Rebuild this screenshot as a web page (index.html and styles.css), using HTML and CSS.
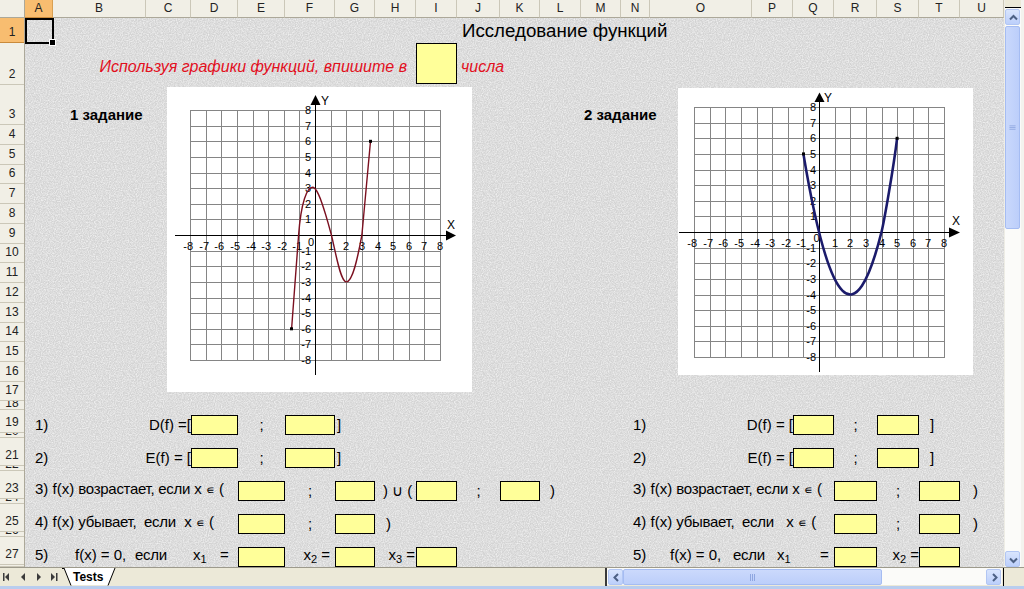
FILE: index.html
```html
<!DOCTYPE html>
<html lang="ru">
<head>
<meta charset="utf-8">
<title>Исследование функций</title>
<link rel="stylesheet" href="styles.css">
</head>
<body>
<div class="excel">
  <div class="work">
    <div class="main">
      <div class="colheads">
        <div class="corner"></div>
        <div class="ch sel">A</div><div class="ch">B</div><div class="ch">C</div><div class="ch">D</div><div class="ch">E</div><div class="ch">F</div><div class="ch">G</div><div class="ch">H</div><div class="ch">I</div><div class="ch">J</div><div class="ch">K</div><div class="ch">L</div><div class="ch">M</div><div class="ch">N</div><div class="ch">O</div><div class="ch">P</div><div class="ch">Q</div><div class="ch">R</div><div class="ch">S</div><div class="ch">T</div><div class="ch">U</div>
      </div>
      <div class="body">
        <div class="rowheads">
          <div class="rh sel">1</div><div class="rh">2</div><div class="rh">3</div><div class="rh">4</div><div class="rh">5</div><div class="rh">6</div><div class="rh">7</div><div class="rh">8</div><div class="rh">9</div><div class="rh">10</div><div class="rh">11</div><div class="rh">12</div><div class="rh">13</div><div class="rh">14</div><div class="rh">15</div><div class="rh">16</div><div class="rh">17</div><div class="rh short">18</div><div class="rh">19</div><div class="rh short">20</div><div class="rh">21</div><div class="rh short">22</div><div class="rh">23</div><div class="rh short">24</div><div class="rh">25</div><div class="rh short">26</div><div class="rh">27</div><div class="rh short">28</div>
        </div>
        <div class="sheet">
          <div class="a1"></div>
          <div class="title">Исследование функций</div>
          <div class="hint">Используя графики функций, впишите в</div>
          <div class="bigbox"></div>
          <div class="hint2">числа</div>
          <div class="task task1">1 задание</div>
          <div class="task task2">2 задание</div>

          <div class="chart chart1">
            <svg width="305" height="305" viewBox="0 0 305 305">
              <path class="grid" d="M23.5 23V274M39.5 23V274M54.5 23V274M70.5 23V274M86.5 23V274M101.5 23V274M117.5 23V274M132.5 23V274M164.5 23V274M179.5 23V274M195.5 23V274M211.5 23V274M226.5 23V274M242.5 23V274M257.5 23V274M273.5 23V274M23 23.5H274M23 39.5H274M23 54.5H274M23 70.5H274M23 86.5H274M23 101.5H274M23 117.5H274M23 132.5H274M23 164.5H274M23 179.5H274M23 195.5H274M23 211.5H274M23 226.5H274M23 242.5H274M23 257.5H274M23 273.5H274"/>
              <path class="axis" d="M8 148.5H281M148.5 288V16"/>
              <polygon class="arrow" points="279,143.5 289,148.5 279,153.5"/>
              <polygon class="arrow" points="143.5,18 148.5,8 153.5,18"/>
              <text class="lbl" x="154" y="18">Y</text>
              <text class="lbl" x="280" y="142">X</text>
              <g class="tk xt">
                <text x="26" y="163">-8</text><text x="42" y="163">-7</text><text x="57" y="163">-6</text><text x="73" y="163">-5</text><text x="89" y="163">-4</text><text x="104" y="163">-3</text><text x="120" y="163">-2</text><text x="135" y="163">-1</text><text x="167" y="163">1</text><text x="182" y="163">2</text><text x="198" y="163">3</text><text x="214" y="163">4</text><text x="229" y="163">5</text><text x="245" y="163">6</text><text x="260" y="163">7</text><text x="276" y="163">8</text>
              </g>
              <g class="tk yt">
                <text x="144" y="27">8</text><text x="144" y="43">7</text><text x="144" y="58">6</text><text x="144" y="74">5</text><text x="144" y="90">4</text><text x="144" y="105">3</text><text x="144" y="121">2</text><text x="144" y="136">1</text><text x="144" y="168">-1</text><text x="144" y="183">-2</text><text x="144" y="199">-3</text><text x="144" y="215">-4</text><text x="144" y="230">-5</text><text x="144" y="246">-6</text><text x="144" y="261">-7</text><text x="144" y="277">-8</text>
              </g>
              <text class="tk zero" x="144" y="159">0</text>
              <path class="curve1" d="M124.6 241.8L131.6 148C134.1 115 140 100.3 145.7 100.3C151 100.3 158 124 164.4 148C169 167 173.5 194.9 179.3 194.9C185.5 194.9 190.5 172 194.9 148L203.5 54.3"/>
              <rect class="dot" x="123" y="240.3" width="3" height="3"/>
              <rect class="dot" x="202" y="52.8" width="3" height="3"/>
            </svg>
          </div>

          <div class="chart chart2">
            <svg width="295" height="287" viewBox="0 0 295 287">
              <path class="grid" d="M16.5 19V270M32.5 19V270M47.5 19V270M63.5 19V270M79.5 19V270M94.5 19V270M110.5 19V270M125.5 19V270M157.5 19V270M172.5 19V270M188.5 19V270M204.5 19V270M219.5 19V270M235.5 19V270M250.5 19V270M266.5 19V270M16 19.5H267M16 35.5H267M16 50.5H267M16 66.5H267M16 82.5H267M16 97.5H267M16 113.5H267M16 128.5H267M16 160.5H267M16 175.5H267M16 191.5H267M16 207.5H267M16 222.5H267M16 238.5H267M16 253.5H267M16 269.5H267"/>
              <path class="axis" d="M1 144.5H274M141.5 284V12"/>
              <polygon class="arrow" points="271,139.5 282,144.5 271,149.5"/>
              <polygon class="arrow" points="136.5,14 141.5,4.5 146.5,14"/>
              <text class="lbl" x="146" y="14">Y</text>
              <text class="lbl" x="274" y="137">X</text>
              <g class="tk xt">
                <text x="19" y="159">-8</text><text x="35" y="159">-7</text><text x="50" y="159">-6</text><text x="66" y="159">-5</text><text x="82" y="159">-4</text><text x="97" y="159">-3</text><text x="113" y="159">-2</text><text x="128" y="159">-1</text><text x="160" y="159">1</text><text x="175" y="159">2</text><text x="191" y="159">3</text><text x="207" y="159">4</text><text x="222" y="159">5</text><text x="238" y="159">6</text><text x="253" y="159">7</text><text x="269" y="159">8</text>
              </g>
              <g class="tk yt">
                <text x="138" y="23">8</text><text x="138" y="39">7</text><text x="138" y="54">6</text><text x="138" y="70">5</text><text x="138" y="86">4</text><text x="138" y="101">3</text><text x="138" y="117">2</text><text x="138" y="132">1</text><text x="138" y="164">-1</text><text x="138" y="179">-2</text><text x="138" y="195">-3</text><text x="138" y="211">-4</text><text x="138" y="226">-5</text><text x="138" y="242">-6</text><text x="138" y="257">-7</text><text x="138" y="273">-8</text>
              </g>
              <text class="tk zero" x="138.5" y="154">0</text>
              <path class="curve2" d="M125.4 65.9Q164.4 300.25 203.5 144C206.1 133.6 215.5 80 219.1 50.3"/>
              <rect class="dot" x="124" y="64.4" width="3" height="3"/>
              <rect class="dot" x="217.6" y="48.8" width="3" height="3"/>
            </svg>
          </div>

          <!-- row 19 -->
          <div class="t r19 cA s2 num">1)</div>
          <div class="t r19 cB s2 end">D(f) =[</div>
          <div class="box r19 cD"></div>
          <div class="t r19 cE mid">;</div>
          <div class="box r19 cF"></div>
          <div class="t r19 cG pl2">]</div>
          <div class="t r19 cN num2">1)</div>
          <div class="t r19 cO s2 end">D(f) = [</div>
          <div class="box r19 cQ"></div>
          <div class="t r19 cR mid">;</div>
          <div class="box r19 cS"></div>
          <div class="t r19 cT pl11">]</div>

          <!-- row 21 -->
          <div class="t r21 cA s2 num">2)</div>
          <div class="t r21 cB s2 end">E(f) = [</div>
          <div class="box r21 cD"></div>
          <div class="t r21 cE mid">;</div>
          <div class="box r21 cF"></div>
          <div class="t r21 cG pl2">]</div>
          <div class="t r21 cN num2">2)</div>
          <div class="t r21 cO s2 end">E(f) = [</div>
          <div class="box r21 cQ"></div>
          <div class="t r21 cR mid">;</div>
          <div class="box r21 cS"></div>
          <div class="t r21 cT pl11">]</div>

          <!-- row 23 -->
          <div class="t r23 cA s4 num">3) f(x) <span class="cy">возрастает, если</span> x <span class="el">∊</span> (</div>
          <div class="box r23 cE"></div>
          <div class="t r23 cF mid">;</div>
          <div class="box r23 cG"></div>
          <div class="t r23 cH pl8">) ∪ (</div>
          <div class="box r23 cI"></div>
          <div class="t r23 cJ mid">;</div>
          <div class="box r23 cK"></div>
          <div class="t r23 cL pl10">)</div>
          <div class="t r23 cN s4 num2">3) f(x) <span class="cy">возрастает, если</span> x <span class="el">∊</span> (</div>
          <div class="box r23 cR"></div>
          <div class="t r23 cS mid">;</div>
          <div class="box r23 cT"></div>
          <div class="t r23 cU pl13">)</div>

          <!-- row 25 -->
          <div class="t r25 cA s4 num">4) f(x) <span class="cy">убывает,&nbsp; если</span>&nbsp; x <span class="el">∊</span> (</div>
          <div class="box r25 cE"></div>
          <div class="t r25 cF mid">;</div>
          <div class="box r25 cG"></div>
          <div class="t r25 cH pl11">)</div>
          <div class="t r25 cN s4 num2">4) f(x) <span class="cy">убывает,&nbsp; если</span>&nbsp;&nbsp; x <span class="el">∊</span> (</div>
          <div class="box r25 cR"></div>
          <div class="t r25 cS mid">;</div>
          <div class="box r25 cT"></div>
          <div class="t r25 cU pl13">)</div>

          <!-- row 27 -->
          <div class="t r27 cA s4 seq num"><span class="w40">5)</span><span class="w60">f(x) = 0,</span><span class="w58 cy">если</span><span class="w27">x<span class="sub">1</span></span><span>=</span></div>
          <div class="box r27 cE"></div>
          <div class="t r27 cF end pr5">x<span class="sub">2</span> =</div>
          <div class="box r27 cG"></div>
          <div class="t r27 cH end pr1">x<span class="sub">3</span> =</div>
          <div class="box r27 cI"></div>
          <div class="t r27 cN s4 seq num2"><span class="w37">5)</span><span class="w63">f(x) = 0,</span><span class="w44 cy">если</span><span class="w43">x<span class="sub">1</span></span><span>=</span></div>
          <div class="box r27 cR"></div>
          <div class="t r27 cS end">x<span class="sub">2</span> =</div>
          <div class="box r27 cT"></div>
        </div>
      </div>
    </div>
    <div class="vscroll">
      <div class="split"></div>
      <div class="sbtn vbtn"><svg width="15" height="16" viewBox="0 0 15 16"><path class="chev" d="M4 9.5L7.5 6L11 9.5"/></svg></div>
      <div class="vtrack">
        <div class="vthumb"><svg width="15" height="8" viewBox="0 0 15 8"><path class="grip" d="M4 1.5H11M4 3.5H11M4 5.5H11"/></svg></div>
      </div>
      <div class="sbtn vbtn"><svg width="15" height="16" viewBox="0 0 15 16"><path class="chev" d="M4 6.5L7.5 10L11 6.5"/></svg></div>
    </div>
    <div class="edge"></div>
  </div>
  <div class="tabbar">
    <div class="navs">
      <svg width="62" height="18" viewBox="0 0 62 18">
        <path class="navg" d="M3 5h1.5v8H3zM9 5v8L5 9zM25 5v8L21 9zM37 5v8l4-4zM51 5v8l4-4zM56 5h1.5v8H56z"/>
      </svg>
    </div>
    <div class="tabs">
      <svg width="545" height="18" viewBox="0 0 545 18">
        <polygon class="tabbg" points="2,0 9,17 46,17 53,0"/>
        <path class="tabline" d="M2 0L9 17.5M46 17.5L53 0M-2 0.5H2"/>
        <text class="tabtxt" x="11" y="13">Tests</text>
      </svg>
    </div>
    <div class="hscroll">
      <div class="sbtn hbtn"><svg width="15" height="15" viewBox="0 0 15 15"><path class="chev" d="M9 4L5.5 7.5L9 11"/></svg></div>
      <div class="hthumb"><svg width="10" height="15" viewBox="0 0 10 15"><path class="grip" d="M2.5 4V11M4.5 4V11M6.5 4V11"/></svg></div>
      <div class="htrack"></div>
      <div class="sbtn hbtn"><svg width="15" height="15" viewBox="0 0 15 15"><path class="chev" d="M6 4L9.5 7.5L6 11"/></svg></div>
    </div>
    <div class="tabcorner"></div>
  </div>
  <div class="status"></div>
</div>
</body>
</html>
```

FILE: styles.css
```css
* { box-sizing: border-box; }
html, body { margin: 0; padding: 0; }
body {
  width: 1024px;
  height: 589px;
  overflow: hidden;
  background: #fff;
  font-family: "Liberation Sans", Arial, sans-serif;
  color: #000;
}
.excel { width: 1024px; height: 589px; display: flex; flex-direction: column; }
.work { display: flex; height: 567px; }
.main { width: 1004px; display: flex; flex-direction: column; }

/* column headers */
.colheads {
  height: 18px;
  display: grid;
  grid-template-columns: 25px 28px 93px 45px 47px 47px 50px 40px 41px 41px 43px 40px 41px 40px 29px 102px 41px 41px 43px 42px 41px 44px;
  background: #f1efe6;
}
.corner { border-right: 1px solid #aca899; border-bottom: 1px solid #aca899; }
.ch {
  font-size: 12px;
  line-height: 17px;
  text-align: center;
  color: #222;
  border-right: 1px solid #cbc7b8;
  border-bottom: 1px solid #aca899;
  overflow: hidden;
}
.ch.sel { background: #f8bd70; border-right-color: #d9a052; border-bottom-color: #c98a3b; }

/* row headers */
.body { display: flex; height: 549px; }
.rowheads {
  width: 25px;
  display: grid;
  grid-template-rows: 25px 42px 40px 20px 20px 19px 20px 20px 20px 19px 20px 20px 20px 19px 20px 20px 19px 9px 23px 5px 28px 5px 28px 5px 28px 5px 28px 2px;
  background: #f1efe6;
  border-right: 1px solid #aca899;
  overflow: hidden;
}
.rh {
  font-size: 12px;
  line-height: 12px;
  color: #222;
  display: flex;
  align-items: flex-end;
  justify-content: center;
  padding-bottom: 4px;
  border-bottom: 1px solid #cbc7b8;
  overflow: hidden;
}
.rh.short { padding-bottom: 0; }
.rh.sel { background: #f8bd70; border-bottom-color: #c98a3b; }

/* sheet */
.sheet {
  width: 979px;
  height: 549px;
  overflow: hidden;
  display: grid;
  grid-template-columns: 28px 93px 45px 47px 47px 50px 40px 41px 41px 43px 40px 41px 40px 29px 102px 41px 41px 43px 42px 41px 44px;
  grid-template-rows: 25px 42px 40px 20px 20px 19px 20px 20px 20px 19px 20px 20px 20px 19px 20px 20px 19px 9px 23px 5px 28px 5px 28px 5px 28px 5px 28px 2px;
  background-color: #d3d3d3;
  background-image: url("data:image/svg+xml,%3Csvg xmlns='http://www.w3.org/2000/svg' width='180' height='180'%3E%3Cfilter id='n'%3E%3CfeTurbulence type='fractalNoise' baseFrequency='0.85' numOctaves='2' stitchTiles='stitch'/%3E%3CfeColorMatrix values='0 0 0 0 1 0 0 0 0 1 0 0 0 0 1 1.3 0 0 0 -0.42'/%3E%3C/filter%3E%3Crect width='180' height='180' filter='url(%23n)'/%3E%3C/svg%3E");
  font-size: 15px;
}
.a1 {
  grid-column: 1;
  grid-row: 1;
  border: 2px solid #000;
  margin: 0 -1px -1px 0;
  position: relative;
}
.a1::after {
  content: "";
  position: absolute;
  right: -4px;
  bottom: -4px;
  width: 5px;
  height: 5px;
  background: #000;
  border: 1px solid #fff;
}
.title {
  grid-column: 10 / span 6;
  grid-row: 1;
  align-self: end;
  padding-left: 5px;
  margin-bottom: 3px;
  font-size: 18.7px;
  line-height: 18px;
  white-space: nowrap;
}
.hint {
  grid-column: 2 / span 7;
  grid-row: 2;
  justify-self: end;
  align-self: end;
  padding-right: 9px;
  margin-bottom: 10px;
  font-size: 16px;
  line-height: 16px;
  font-style: italic;
  color: #e2101e;
  white-space: nowrap;
}
.hint2 {
  grid-column: 10 / span 2;
  grid-row: 2;
  align-self: end;
  padding-left: 4px;
  margin-bottom: 10px;
  font-size: 16px;
  line-height: 16px;
  font-style: italic;
  color: #e2101e;
  white-space: nowrap;
}
.bigbox {
  grid-column: 9;
  grid-row: 2;
  margin-bottom: 1px;
  background: #ffff99;
  border: 1px solid #000;
}
.task {
  grid-row: 3;
  align-self: end;
  margin-bottom: 3px;
  font-size: 15px;
  line-height: 15px;
  font-weight: bold;
  white-space: nowrap;
}
.task1 { grid-column: 2 / span 2; padding-left: 17px; }
.task2 { grid-column: 13 / span 3; padding-left: 3px; }

/* charts */
.chart { background: #fff; justify-self: start; align-self: start; }
.chart svg { display: block; }
.chart1 { grid-column: 3 / span 8; grid-row: 3 / span 15; width: 305px; height: 305px; margin: 2px 0 0 21px; }
.chart2 { grid-column: 15 / span 7; grid-row: 3 / span 15; width: 295px; height: 287px; margin: 3px 0 0 28px; }
.grid { stroke: #858585; stroke-width: 1; fill: none; }
.axis { stroke: #000; stroke-width: 1; fill: none; }
.arrow { fill: #000; }
.lbl { font-family: "Liberation Sans", Arial, sans-serif; font-size: 12px; fill: #000; }
.tk { font-family: "Liberation Sans", Arial, sans-serif; font-size: 11px; fill: #000; }
.xt, .yt { text-anchor: end; }
.zero { text-anchor: middle; }
.curve1 { fill: none; stroke: #7b1020; stroke-width: 1.4; }
.curve2 { fill: none; stroke: #1b1b6b; stroke-width: 2.6; }
.dot { fill: #000; }

/* bottom task rows */
.t {
  align-self: end;
  margin-bottom: 1px;
  line-height: 15px;
  white-space: nowrap;
}
.box {
  align-self: end;
  height: 20px;
  margin-bottom: -2px;
  background: #ffff99;
  border: 1px solid #000;
}
.cy { font-size: 15px; letter-spacing: -0.3px; }
.el { font-size: 12px; }
.sub { font-size: 11px; position: relative; top: 3px; }
.seq { display: flex; }
.w27 { width: 27px; } .w37 { width: 37px; } .w40 { width: 40px; } .w43 { width: 43px; }
.w44 { width: 44px; } .w58 { width: 58px; } .w60 { width: 60px; } .w63 { width: 63px; }

.r19 { grid-row: 19; } .r21 { grid-row: 21; } .r23 { grid-row: 23; } .r25 { grid-row: 25; } .r27 { grid-row: 27; }
.cA { grid-column-start: 1; } .cB { grid-column-start: 2; } .cD { grid-column-start: 4; }
.cE { grid-column-start: 5; } .cF { grid-column-start: 6; } .cG { grid-column-start: 7; }
.cH { grid-column-start: 8; } .cI { grid-column-start: 9; } .cJ { grid-column-start: 10; }
.cK { grid-column-start: 11; } .cL { grid-column-start: 12; } .cN { grid-column-start: 14; }
.cO { grid-column-start: 15; } .cQ { grid-column-start: 17; } .cR { grid-column-start: 18; }
.cS { grid-column-start: 19; } .cT { grid-column-start: 20; } .cU { grid-column-start: 21; }
.s2 { grid-column-end: span 2; } .s4 { grid-column-end: span 4; }
.num { padding-left: 10px; }
.num2 { padding-left: 12px; }
.end { justify-self: end; }
.mid { justify-self: center; }
.pl2 { padding-left: 2px; } .pl8 { padding-left: 8px; } .pl10 { padding-left: 10px; }
.pl11 { padding-left: 11px; } .pl13 { padding-left: 13px; }
.pr1 { padding-right: 1px; } .pr5 { padding-right: 5px; }

/* vertical scrollbar */
.vscroll {
  width: 17px;
  display: flex;
  flex-direction: column;
  background: #fbfbf9;
  border-left: 1px solid #eeede5;
}
.split { height: 8px; background: #ece9d8; border-bottom: 1px solid #000; margin-bottom: 1px; }
.sbtn {
  background: linear-gradient(to bottom, #d9e5fd, #bccffb);
  border: 1px solid #b2c6f3;
  border-radius: 2px;
}
.sbtn svg { display: block; }
.vbtn { height: 16px; width: 15px; }
.chev { fill: none; stroke: #4d6185; stroke-width: 2; }
.vtrack { flex: 1; display: flex; flex-direction: column; padding-top: 1px; }
.vthumb {
  width: 15px;
  height: 203px;
  background: linear-gradient(to right, #c9d8fc, #bccefa);
  border: 1px solid #a5bcf2;
  border-radius: 2px;
  display: flex;
  align-items: center;
}
.grip { stroke: #8ea6e0; stroke-width: 1; fill: none; }
.edge { width: 3px; background: #f4f3ee; }

/* tab bar */
.tabbar {
  height: 19px;
  display: flex;
  background: #ece9d8;
  border-top: 1px solid #9d9a8c;
}
.navs { width: 62px; }
.navs svg { display: block; }
.navg { fill: #3b3b3b; }
.tabs { width: 545px; border-right: 2px solid #3a3a3a; }
.tabs svg { display: block; }
.tabbg { fill: #fff; }
.tabline { stroke: #000; stroke-width: 1; fill: none; }
.tabtxt { font-family: "Liberation Sans", Arial, sans-serif; font-size: 12px; font-weight: bold; fill: #000; }
.hscroll {
  width: 395px;
  height: 17px;
  display: flex;
  align-items: center;
  padding: 0 1px;
  background: #fbfbf9;
}
.hbtn { width: 15px; height: 16px; }
.hthumb {
  width: 259px;
  height: 16px;
  background: linear-gradient(to bottom, #cbd9fc, #bccefa);
  border: 1px solid #a5bcf2;
  border-radius: 2px;
  display: flex;
  justify-content: center;
}
.hthumb svg { display: block; }
.htrack { flex: 1; }
.tabcorner { flex: 1; border-left: 1px solid #000; margin-left: 1px; background: #ece9d8; }
.status { height: 3px; background: #b9cdee; }
```
